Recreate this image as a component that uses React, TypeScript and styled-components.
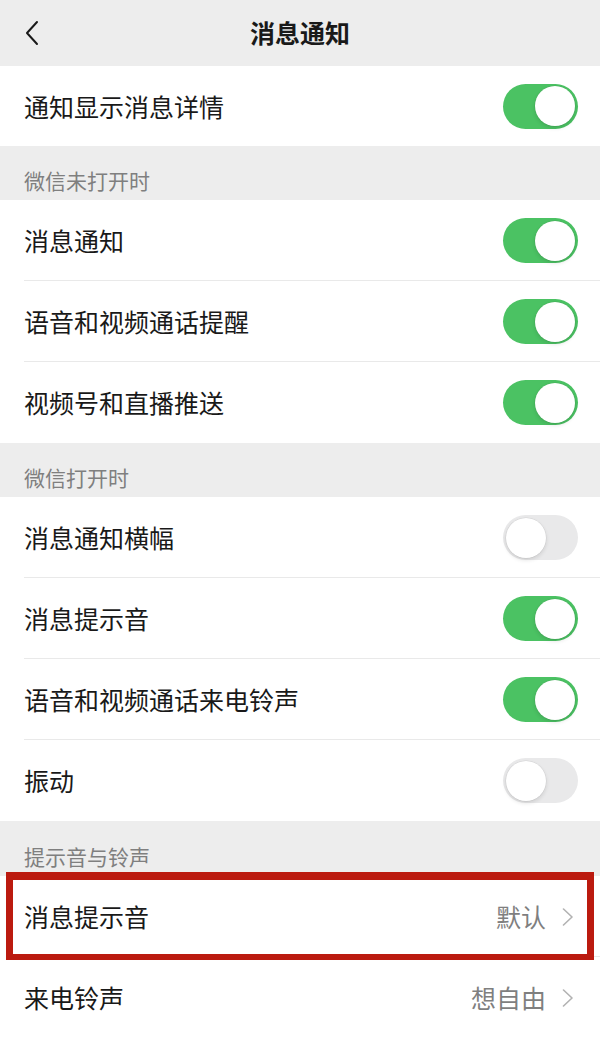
import React from "react";
import styled, { createGlobalStyle } from "styled-components";

const Global = createGlobalStyle`
  html, body { margin: 0; padding: 0; background: #ededed; }
  body { font-family: "Noto Sans CJK SC", "Noto Sans", sans-serif; -webkit-font-smoothing: antialiased; }
  * { box-sizing: border-box; }
`;

const Page = styled.div`
  width: 600px;
  height: 1037px;
  overflow: hidden;
  background: #ededed;
  display: flex;
  flex-direction: column;
`;

const NavBar = styled.div`
  height: 66px;
  flex: none;
  display: flex;
  align-items: center;
  justify-content: center;
  position: relative;
  background: #ededed;
`;

const BackButton = styled.div`
  position: absolute;
  left: 20px;
  top: 18px;
  width: 24px;
  height: 30px;
  display: flex;
  align-items: center;
  justify-content: center;
`;

const Title = styled.div`
  font-size: 25px;
  font-weight: 700;
  color: #191919;
  line-height: 1;
  margin-top: -2px;
`;

const Group = styled.div`
  background: #ffffff;
  display: flex;
  flex-direction: column;
`;

const SectionHeader = styled.div<{ $h?: number }>`
  height: ${(p) => p.$h ?? 54}px;
  flex: none;
  padding: 0 24px 9px;
  display: flex;
  align-items: flex-end;
  font-size: 21px;
  color: #7f7f7f;
  line-height: 1;
`;

const Row = styled.div<{ $h?: number; $last?: boolean; $link?: boolean }>`
  height: ${(p) => p.$h ?? 81}px;
  flex: none;
  position: relative;
  display: flex;
  align-items: center;
  padding: 0 ${(p) => (p.$link ? 26 : 23)}px 0 24px;
  &::before {
    content: "";
    position: absolute;
    left: 24px;
    right: 0;
    bottom: 0;
    height: 1px;
    background: #e9e9e9;
    display: ${(p) => (p.$last ? "none" : "block")};
  }
`;

const Highlight = styled.div`
  position: absolute;
  left: 6px;
  right: 6px;
  top: -4px;
  bottom: -3px;
  border: 7px solid #bb1a0f;
  border-top-width: 8px;
  border-bottom-width: 6px;
  pointer-events: none;
  z-index: 2;
`;

const Label = styled.div`
  flex: 1;
  font-size: 25px;
  color: #191919;
  line-height: 1;
`;

const Value = styled.div`
  font-size: 25px;
  color: #7f7f7f;
  line-height: 1;
  margin-right: 16px;
`;

const Track = styled.div<{ $on: boolean }>`
  width: 75px;
  height: 45px;
  border-radius: 23px;
  background: ${(p) => (p.$on ? "#4bc263" : "#e9e9ea")};
  position: relative;
  flex: none;
  margin-right: -1px;
`;

const Knob = styled.div<{ $on: boolean }>`
  position: absolute;
  top: 2.5px;
  left: ${(p) => (p.$on ? "32px" : "2.5px")};
  width: 40px;
  height: 40px;
  border-radius: 50%;
  background: #ffffff;
  box-shadow: 0 2px 4px rgba(0, 0, 0, 0.12), 0 0 0 0.5px rgba(0, 0, 0, 0.08);
`;

const Toggle = ({ on }: { on: boolean }) => (
  <Track $on={on}>
    <Knob $on={on} />
  </Track>
);

const Chevron = () => (
  <svg width="12" height="18" viewBox="0 0 12 18" fill="none">
    <path d="M1.5 1 L10 9 L1.5 17" stroke="#b2b2b2" strokeWidth="1.6" strokeLinecap="round" strokeLinejoin="round" />
  </svg>
);

const BackIcon = () => (
  <svg width="16" height="26" viewBox="0 0 16 26" fill="none">
    <path d="M13 2 L3 13 L13 24" stroke="#191919" strokeWidth="2" strokeLinecap="round" strokeLinejoin="round" />
  </svg>
);

type Item = { label: string; on?: boolean };

const whenClosed: Item[] = [
  { label: "消息通知", on: true },
  { label: "语音和视频通话提醒", on: true },
  { label: "视频号和直播推送", on: true },
];

const whenOpen: Item[] = [
  { label: "消息通知横幅", on: false },
  { label: "消息提示音", on: true },
  { label: "语音和视频通话来电铃声", on: true },
  { label: "振动", on: false },
];

const ToggleGroup = ({ items }: { items: Item[] }) => (
  <Group>
    {items.map((it, i) => (
      <Row key={it.label} $last={i === items.length - 1}>
        <Label>{it.label}</Label>
        <Toggle on={!!it.on} />
      </Row>
    ))}
  </Group>
);

export default function App() {
  return (
    <>
      <Global />
      <Page>
        <NavBar>
          <BackButton>
            <BackIcon />
          </BackButton>
          <Title>消息通知</Title>
        </NavBar>
        <Group>
          <Row $h={80} $last>
            <Label>通知显示消息详情</Label>
            <Toggle on />
          </Row>
        </Group>
        <SectionHeader>微信未打开时</SectionHeader>
        <ToggleGroup items={whenClosed} />
        <SectionHeader>微信打开时</SectionHeader>
        <ToggleGroup items={whenOpen} />
        <SectionHeader $h={55}>提示音与铃声</SectionHeader>
        <Group>
          <Row $link>
            <Label>消息提示音</Label>
            <Value>默认</Value>
            <Chevron />
            <Highlight />
          </Row>
          <Row $link>
            <Label>来电铃声</Label>
            <Value>想自由</Value>
            <Chevron />
          </Row>
        </Group>
      </Page>
    </>
  );
}
